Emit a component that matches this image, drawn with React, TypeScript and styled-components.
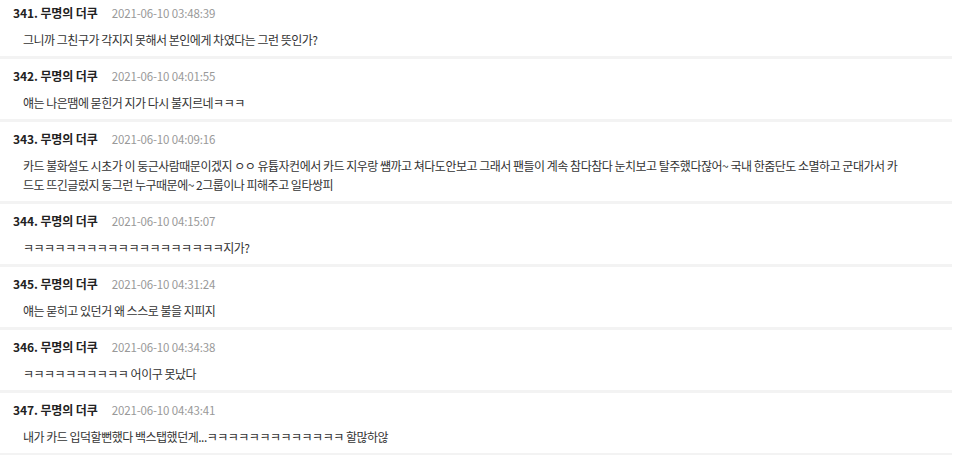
import styled, { createGlobalStyle } from 'styled-components'

type Comment = {
  no: number
  author: string
  date: string
  body: string
}

const comments: Comment[] = [
  { no: 341, author: '무명의 더쿠', date: '2021-06-10 03:48:39', body: '그니까 그친구가 각지지 못해서 본인에게 차였다는 그런 뜻인가?' },
  { no: 342, author: '무명의 더쿠', date: '2021-06-10 04:01:55', body: '얘는 나은땜에 묻힌거 지가 다시 불지르네ㅋㅋㅋ' },
  {
    no: 343,
    author: '무명의 더쿠',
    date: '2021-06-10 04:09:16',
    body:
      '카드 불화설도 시초가 이 둥근사람때문이겠지 ㅇㅇ 유튭자컨에서 카드 지우랑 썜까고 쳐다도안보고 그래서 팬들이 계속 참다참다 눈치보고 탈주했다잖어~ 국내 한줌단도 소멸하고 군대가서 카드도 뜨긴글렀지 둥그런 누구때문에~ 2그룹이나 피해주고 일타쌍피'
  },
  { no: 344, author: '무명의 더쿠', date: '2021-06-10 04:15:07', body: 'ㅋㅋㅋㅋㅋㅋㅋㅋㅋㅋㅋㅋㅋㅋㅋㅋㅋㅋㅋ지가?' },
  { no: 345, author: '무명의 더쿠', date: '2021-06-10 04:31:24', body: '얘는 묻히고 있던거 왜 스스로 불을 지피지' },
  { no: 346, author: '무명의 더쿠', date: '2021-06-10 04:34:38', body: 'ㅋㅋㅋㅋㅋㅋㅋㅋㅋㅋ 어이구 못났다' },
  { no: 347, author: '무명의 더쿠', date: '2021-06-10 04:43:41', body: '내가 카드 입덕할뻔했다 백스탭했던게...ㅋㅋㅋㅋㅋㅋㅋㅋㅋㅋㅋㅋㅋ 할많하않' }
]

const GlobalStyle = createGlobalStyle`
  html, body {
    margin: 0;
    padding: 0;
    background: #fff;
  }
  body {
    font-family: 'Noto Sans CJK KR', 'Noto Sans', sans-serif;
    color: #333;
    overflow: hidden;
  }
`

const App = (): React.JSX.Element => {
  return (
    <>
      <GlobalStyle />
      <List>
        {comments.map((c) => (
          <Item key={c.no}>
            <Header>
              <Author>
                {c.no}. {c.author}
              </Author>
              <DateText>{c.date}</DateText>
            </Header>
            <Body>{c.body}</Body>
          </Item>
        ))}
      </List>
    </>
  )
}

export default App

const List = styled.ul`
  list-style: none;
  margin: -4px 0 0;
  padding: 0;
  width: 952px;
`

const Item = styled.li`
  padding: 8px 0 7px 13px;
  border-bottom: 3px solid #f3f3f3;
`

const Header = styled.div`
  display: flex;
  align-items: center;
  gap: 14px;
  height: 18px;
  line-height: 18px;
`

const Author = styled.span`
  font-size: 12px;
  font-weight: 700;
  color: #222;
  letter-spacing: -0.1px;
`

const DateText = styled.span`
  font-size: 11.5px;
  color: #999;
  letter-spacing: -0.15px;
`

const Body = styled.p`
  margin: 8px 0 0;
  padding: 0 47px 0 10px;
  font-size: 12px;
  line-height: 19px;
  color: #333;
  letter-spacing: -0.5px;
  word-break: break-all;
`
